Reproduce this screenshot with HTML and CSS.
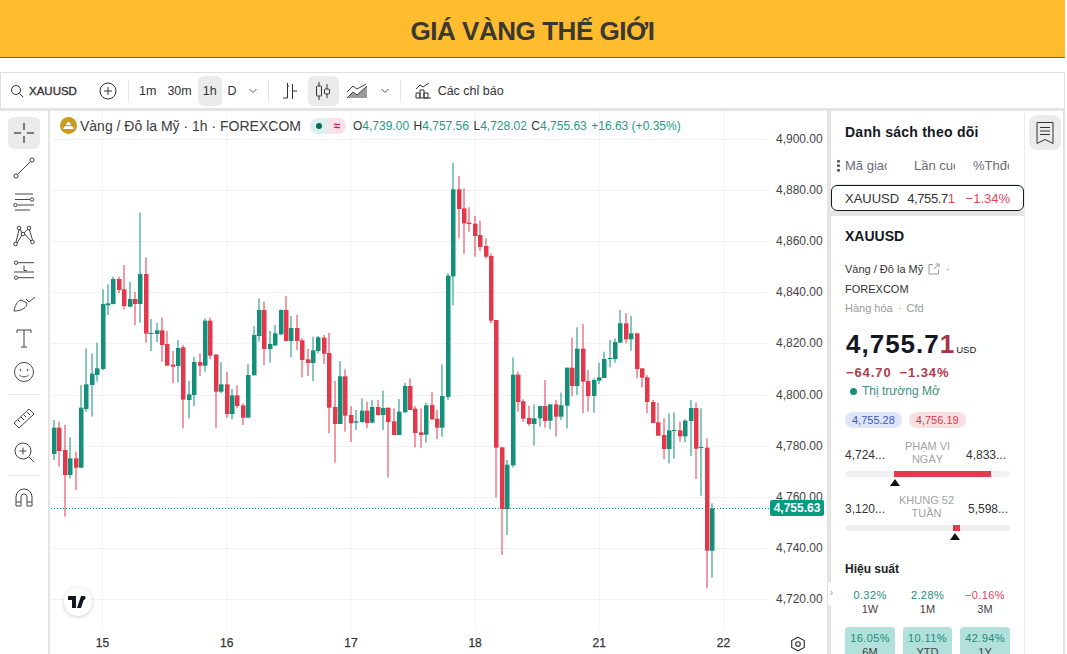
FILE: index.html
```html
<!DOCTYPE html>
<html lang="vi">
<head>
    <meta charset="UTF-8">
    <meta name="viewport" content="width=device-width, initial-scale=1.0">
    <title>Giá vàng thế giới</title>
    <link rel="stylesheet" href="styles.css">
</head>
<body>
    <div class="page">
        <header class="banner">
            <h1>GIÁ VÀNG THẾ GIỚI</h1>
        </header>
        <div class="widget">
            <div class="toolbar">
                <div class="symbol">
                    <svg width="14" height="14" viewBox="0 0 14 14"><circle cx="6" cy="6" r="4.5"/><path d="M9.3 9.3l4 4"/></svg>
                    <span>XAUUSD</span>
                </div>
                <svg class="add-icon" width="18" height="18" viewBox="0 0 18 18"><circle cx="9" cy="9" r="8"/><path d="M9 5v8M5 9h8"/></svg>
                <i class="sep first"></i>
                <span class="tf tf-1m">1m</span>
                <span class="tf">30m</span>
                <span class="tf active">1h</span>
                <span class="tf">D</span>
                <svg class="chev" width="10" height="6" viewBox="0 0 10 6"><path d="M1.5 1l3.5 3.5L8.500 1"/></svg>
                <i class="sep"></i>
                <svg class="tb-icon bars" width="16" height="18" viewBox="0 0 16 18"><path d="M5.500 1v15M1 16h4.500M10.500 2v15M5.500 4H7M10.500 9H15"/></svg>
                <span class="tb-btn active">
                    <svg class="tb-icon" width="16" height="20" viewBox="0 0 16 20"><path d="M4 1v4M4 15v4M12 3v5M12 13v4"/><rect x="1.500" y="5" width="5" height="10" rx="1"/><rect x="9.500" y="8" width="5" height="5" rx="1"/></svg>
                </span>
                <svg class="tb-icon area" width="22" height="16" viewBox="0 0 22 16"><path class="area-fill" d="M1 15l6-6 4 3 10-9v12z"/><path d="M1 9l6-6 4 3 9-5M1 15l6-6 4 3 10-9"/></svg>
                <svg class="chev chev-2" width="10" height="6" viewBox="0 0 10 6"><path d="M1.500 1l3.500 3.500L8.500 1"/></svg>
                <i class="sep"></i>
                <svg class="tb-icon ind" width="17" height="17" viewBox="0 0 17 17"><path d="M1 7l4-4 3 2 6-4M1 16V11h4v5M5 16V8h4v8M9 16v-5h4v5zM1 16h15"/></svg>
                <span class="ind-label">Các chỉ báo</span>
            </div>
            <div class="main">
                <aside class="tools">
                    <span class="tool active">
                        <svg viewBox="0 0 24 24"><path d="M12 2v7M12 15v7M2 12h7M15 12h7"/></svg>
                    </span>
                    <span class="tool">
                        <svg viewBox="0 0 24 24"><circle cx="4" cy="20" r="2"/><circle cx="20" cy="4" r="2"/><path d="M5.500 18.500l13-13"/></svg>
                    </span>
                    <span class="tool">
                        <svg viewBox="0 0 24 24"><path d="M3 4h18M3 9.500h15M6 15h16M3 20h15"/><circle cx="20" cy="9.500" r="1.700"/><circle cx="3.500" cy="15" r="1.700"/></svg>
                    </span>
                    <span class="tool">
                        <svg viewBox="0 0 24 24"><circle cx="7" cy="4" r="1.800"/><circle cx="17" cy="4" r="1.800"/><circle cx="3.500" cy="20" r="1.800"/><circle cx="20.500" cy="18" r="1.800"/><circle cx="11" cy="10" r="1.800"/><path d="M7 6L4 18M8 5l2 4M16 5l-4 4M12.500 10l6.500 7M17.500 6l3 10M5 19l5-8"/></svg>
                    </span>
                    <span class="tool">
                        <svg viewBox="0 0 24 24"><path d="M6 4.700h16M12 7.500v5h3M2 14h20M6 19.700h16"/><circle cx="4" cy="4.700" r="1.700"/><circle cx="4" cy="19.700" r="1.700"/></svg>
                    </span>
                    <span class="tool">
                        <svg viewBox="0 0 24 24"><path d="M2 19c1-5 3-10 7-11l6 3c0 5-6 8-13 8zM14 7l3 3 6-5"/></svg>
                    </span>
                    <span class="tool">
                        <svg viewBox="0 0 24 24"><path d="M5 7V4h14v3M12 4v17M9 21h6"/></svg>
                    </span>
                    <span class="tool">
                        <svg viewBox="0 0 24 24"><circle cx="12" cy="12" r="9.500"/><circle cx="8.500" cy="10" r=".6"/><circle cx="15.500" cy="10" r=".6"/><path d="M7.500 15c2.500 2.500 6.500 2.500 9 0"/></svg>
                    </span>
                    <i class="tool-sep"></i>
                    <span class="tool">
                        <svg viewBox="0 0 24 24"><path d="M2 17L17 3l5 5L7 22zM6 14l2 2M9 11l3 3M12 9l2 2M15 6l3 3"/></svg>
                    </span>
                    <span class="tool">
                        <svg viewBox="0 0 24 24"><circle cx="11" cy="11" r="8"/><path d="M17 17l5 5M11 7.500v7M7.500 11h7"/></svg>
                    </span>
                    <i class="tool-sep second"></i>
                    <span class="tool">
                        <svg viewBox="0 0 24 24"><path d="M4 20V11a8 8 0 0 1 16 0v9h-5v-9a3 3 0 0 0-6 0v9zM4 16h5M15 16h5"/></svg>
                    </span>
                </aside>
                <section class="chart">
                    <svg id="plot" class="plot" viewBox="50 111 777 543"></svg>
                    <div class="legend">
                        <svg class="gold-icon" width="17" height="17" viewBox="0 0 17 17"><circle cx="8.500" cy="8.500" r="8.500"/><path d="M3 12l2-3h7l2 3zM6 8l1.500-3h2L11 8z"/></svg>
                        <span class="legend-title">Vàng / Đô la Mỹ · 1h · FOREXCOM</span>
                        <span class="legend-pill"><b class="pill-dot"><i></i></b><b class="pill-wave">≈</b></span>
                        <span class="ohlc">
                            <span>O<em>4,739.00</em></span>
                            <span>H<em>4,757.56</em></span>
                            <span>L<em>4,728.02</em></span>
                            <span>C<em>4,755.63</em></span>
                            <em>+16.63 (+0.35%)</em>
                        </span>
                    </div>
                    <div class="last-price">4,755.63</div>
                    <div class="tv-logo">
                        <svg width="20" height="12" viewBox="0 0 20 12"><path d="M0 0h8v12H4V4H0zM13 0l-4 12h4l4-12zM15.500 0a2 2 0 1 0 .1 0z"/></svg>
                    </div>
                    <svg class="axis-gear" width="16" height="16" viewBox="0 0 14 14"><path d="M7 1l5.500 3v6L7 13l-5.500-3V4z"/><circle cx="7" cy="7" r="2"/></svg>
                </section>
                <aside class="side">
                    <div class="watch">
                        <h2>Danh sách theo dõi</h2>
                        <div class="watch-head">
                            <span class="grip"></span>
                            <span class="col-name">Mã giao</span>
                            <span class="col-last">Lần cuối</span>
                            <span class="col-chg">%Thđổi</span>
                        </div>
                        <div class="watch-row">
                            <span>XAUUSD</span>
                            <span class="row-price">4,755.7<span class="down">1</span></span>
                            <span class="down row-chg">−1.34%</span>
                        </div>
                    </div>
                    <div class="details">
                        <h3>XAUUSD</h3>
                        <p class="desc">Vàng / Đô la Mỹ
                            <svg width="12" height="12" viewBox="0 0 12 12"><path d="M5 1.500H1v9.500h9.500V7M6 6l5-5M7.500 1H11v3.500"/></svg>
                            <span class="dim">·</span><br>FOREXCOM
                        </p>
                        <p class="kind">Hàng hóa <span class="kind-dot">·</span> Cfd</p>
                        <div class="quote"><span class="quote-val">4,755.7<span class="quote-last">1</span></span><span class="quote-cur">USD</span></div>
                        <div class="change"><span>−64.70</span><span>−1.34%</span></div>
                        <div class="status"><i></i>Thị trường Mở</div>
                        <div class="pills">
                            <span class="pill bid">4,755.28</span>
                            <span class="pill ask">4,756.19</span>
                        </div>
                        <div class="range range-day">
                            <span class="range-val">4,724...</span>
                            <span class="range-name">PHẠM VI NGÀY</span>
                            <span class="range-val">4,833...</span>
                        </div>
                        <div class="track"><i class="fill day"></i></div>
                        <div class="marker marker-day"></div>
                        <div class="range range-year">
                            <span class="range-val">3,120...</span>
                            <span class="range-name">KHUNG 52 TUẦN</span>
                            <span class="range-val">5,598...</span>
                        </div>
                        <div class="track"><i class="fill year"></i></div>
                        <div class="marker marker-year"></div>
                        <h4>Hiệu suất</h4>
                        <div class="perf">
                            <div class="cell"><b class="up">0.32%</b><span>1W</span></div>
                            <div class="cell"><b class="up">2.28%</b><span>1M</span></div>
                            <div class="cell"><b class="down">−0.16%</b><span>3M</span></div>
                            <div class="cell good"><b class="up">16.05%</b><span>6M</span></div>
                            <div class="cell good"><b class="up">10.11%</b><span>YTD</span></div>
                            <div class="cell good"><b class="up">42.94%</b><span>1Y</span></div>
                        </div>
                    </div>
                    <span class="collapse">›</span>
                </aside>
                <aside class="strip">
                    <span class="strip-btn">
                        <svg width="20" height="24" viewBox="0 0 20 24"><path d="M2 1.500h16v21l-8-4-8 4zM5 6.500h10M5 10h10M5 13.500h10"/></svg>
                    </span>
                </aside>
            </div>
        </div>
    </div>
    <script src="chart.js"></script>
</body>
</html>
```

FILE: styles.css
```css
* {
    box-sizing: border-box;
}
html, body {
    margin: 0;
    height: 100%;
    background: #fff;
    overflow: hidden;
}
body {
    font-family: 'Liberation Sans', Arial, sans-serif;
    color: #131722;
}
svg {
    display: block;
    fill: none;
    stroke: #333;
    stroke-width: 1;
}
.page {
    width: 1065px;
    height: 654px;
    overflow: hidden;
}
.banner {
    height: 58px;
    background: #febc2e;
    border-bottom: 1px solid #54704a;
    display: flex;
    align-items: center;
    justify-content: center;
}
.banner h1 {
    margin: 6px 0 0;
    font-size: 26px;
    letter-spacing: -0.45px;
    color: #3a3931;
}
.widget {
    margin-top: 14px;
}

/* top bar */
.toolbar {
    height: 36px;
    border: 1px solid #dedede;
    border-bottom: none;
    display: flex;
    align-items: center;
    font-size: 12.500px;
    color: #333;
    background: #fff;
}
.symbol {
    display: flex;
    align-items: center;
    gap: 5px;
    margin-left: 9px;
    width: 89px;
    font-size: 11.500px;
    font-weight: 400;
    -webkit-text-stroke: 0.35px #333;
}
.add-icon {
    margin-right: 11px;
}
.sep {
    width: 1px;
    height: 22px;
    background: #e6e6e6;
    margin: 0 5px 0 0;
}
.tf {
    padding: 0 5px;
    height: 30px;
    line-height: 30px;
    margin-right: 1px;
    border-radius: 6px;
}
.tf.active, .tb-btn.active {
    background: #ebebeb;
}
.chev {
    margin: 0 10px 0 5px;
    stroke: #555;
}
.bars {
    margin: 0 10px 0 8px;
}
.tb-btn {
    width: 31px;
    height: 30px;
    border-radius: 6px;
    display: flex;
    align-items: center;
    justify-content: center;
    margin-right: 7px;
}
.area {
    margin-right: 12px;
    stroke: #444;
}
.area-fill {
    fill: #9a9a9a;
    stroke: none;
}
.chev-2 {
    margin: 0 10px 0 0;
}
.ind {
    margin: 0 6px 0 9px;
}
.ind-label {
    font-size: 12.500px;
}

/* body of the widget */
.main {
    height: 546px;
    background: #e4e4e4;
    padding-top: 3px;
    display: flex;
    align-items: stretch;
}
.tools {
    width: 48px;
    margin-right: 2px;
    background: #fff;
    padding-top: 6px;
    display: flex;
    flex-direction: column;
    align-items: center;
}
.tool {
    width: 32px;
    height: 34px;
    flex: none;
    display: flex;
    align-items: center;
    justify-content: center;
    border-radius: 6px;
}
.tool svg {
    width: 24px;
    height: 24px;
    stroke: #444;
}
.tool.active {
    height: 32px;
    margin-bottom: 2px;
    background: #ebebeb;
}
.tool.active svg path {
    stroke: #555;
    stroke-width: 1.500;
}
.tool-sep {
    width: 32px;
    height: 1px;
    flex: none;
    background: #e6e6e6;
    margin: 5px 0 6px;
}
.tool-sep.second {
    margin: 6px 0 5px;
}

/* chart pane */
.chart {
    position: relative;
    width: 777px;
    background: #fff;
}
.plot {
    width: 777px;
    height: 543px;
    stroke: none;
}
.plot text {
    font-size: 12px;
    fill: #444;
    stroke: none;
}
.plot .time {
    text-anchor: middle;
    fill: #333;
    stroke: #333;
    stroke-width: 0.25;
}
.legend {
    position: absolute;
    left: 10px;
    top: 6px;
    display: flex;
    align-items: center;
    height: 17px;
    white-space: nowrap;
}
.gold-icon {
    stroke: none;
    fill: #cc9c21;
    margin-right: 3px;
}
.gold-icon path {
    fill: #fff;
}
.legend-title {
    font-size: 14px;
    color: #3c3c3c;
    width: 230px;
}
.legend-pill {
    width: 36px;
    height: 16px;
    border-radius: 8px;
    overflow: hidden;
    display: flex;
    margin-right: 7px;
}
.legend-pill b {
    flex: 1;
    display: flex;
    align-items: center;
    justify-content: center;
    font-size: 12px;
}
.pill-dot {
    background: #dcf1ed;
}
.pill-dot i {
    width: 6px;
    height: 6px;
    border-radius: 50%;
    background: #0a6b5a;
}
.pill-wave {
    background: #fbe0e8;
    color: #c2185b;
}
.ohlc {
    display: flex;
    gap: 4.500px;
    font-size: 12px;
    color: #333;
}
.ohlc em {
    font-style: normal;
    color: #1c9c84;
}
.last-price {
    position: absolute;
    left: 720px;
    top: 389px;
    width: 54px;
    height: 16px;
    line-height: 16px;
    border-radius: 2px;
    background: #089981;
    color: #fff;
    font-size: 12px;
    font-weight: 700;
    text-align: center;
}
.tv-logo {
    position: absolute;
    left: 14px;
    top: 477px;
    width: 28px;
    height: 28px;
    border-radius: 50%;
    background: #fff;
    box-shadow: 0 1px 4px rgba(0, 0, 0, 0.2);
    display: flex;
    align-items: center;
    justify-content: center;
}
.tv-logo svg {
    fill: #131722;
    stroke: none;
}
.axis-gear {
    position: absolute;
    left: 740px;
    top: 525px;
}

/* watchlist + details */
.side {
    position: relative;
    width: 193px;
    margin-left: 4px;
    display: flex;
    flex-direction: column;
    gap: 5px;
}
.watch {
    background: #fff;
    height: 100px;
    flex: none;
}
.watch h2 {
    margin: 0;
    padding: 13px 0 0 14px;
    font-size: 14px;
    line-height: 16px;
    letter-spacing: 0.25px;
}
.watch-head {
    display: flex;
    align-items: center;
    height: 20px;
    margin-top: 15px;
    font-size: 13px;
    color: #6a6d78;
}
.grip {
    width: 3px;
    height: 13px;
    margin: 0 5px 0 6px;
    background: radial-gradient(circle, #555 1.300px, transparent 1.500px) 0 0 / 3px 4.500px;
}
.col-name, .col-last, .col-chg {
    overflow: hidden;
    white-space: nowrap;
}
.col-name {
    width: 42px;
}
.col-last {
    width: 41px;
    margin-left: 27px;
}
.col-chg {
    width: 36px;
    margin-left: 18px;
}
.watch-row {
    margin-top: 10px;
    height: 26px;
    border: 1px solid #131722;
    border-radius: 6px;
    display: flex;
    align-items: center;
    gap: 8px;
    padding-left: 13px;
    font-size: 13px;
    color: #333;
    box-shadow: 0 -6px 0 -5px #e6e6e6;
}
.row-price {
    letter-spacing: -0.4px;
}
.row-chg {
    margin-left: 3px;
}
.down {
    color: #e0455a;
}
.up {
    color: #1c8c78;
}
.details {
    flex: 1;
    background: #fff;
    padding: 12px 14px 0;
    overflow: hidden;
}
.details h3 {
    margin: 0;
    font-size: 14px;
    line-height: 16px;
}
.desc {
    margin: 15px 0 0;
    font-size: 11px;
    line-height: 20px;
    color: #333;
}
.desc svg {
    display: inline-block;
    vertical-align: -2px;
    margin: 0 2px;
    stroke: #999;
}
.dim {
    color: #888;
}
.kind {
    margin: 2px 0 0;
    font-size: 11px;
    line-height: 15px;
    color: #9a9a9a;
}
.kind-dot {
    margin: 0 2px;
}
.quote {
    margin-top: 13px;
    display: flex;
    align-items: baseline;
    height: 31px;
    padding-left: 1px;
}
.quote-val {
    font-size: 26px;
    font-weight: 700;
    letter-spacing: 1px;
    color: #131722;
}
.quote-last {
    color: #a8324a;
}
.quote-cur {
    font-size: 9.500px;
    margin-left: 1px;
}
.change {
    display: flex;
    gap: 8px;
    margin-top: 5px;
    padding-left: 1px;
    font-size: 13px;
    line-height: 16px;
    font-weight: 700;
    letter-spacing: 0.900px;
    color: #b03a4e;
}
.status {
    display: flex;
    align-items: center;
    gap: 5px;
    margin: 2px 0 0 5px;
    font-size: 12px;
    line-height: 16px;
    color: #3e8e7e;
}
.status i {
    width: 7px;
    height: 7px;
    border-radius: 50%;
    background: #1a8f7a;
}
.pills {
    display: flex;
    gap: 7px;
    margin-top: 13px;
}
.pill {
    height: 16px;
    line-height: 16px;
    padding: 0 7px;
    border-radius: 8px;
    font-size: 11px;
}
.bid {
    background: #dfe6fb;
    color: #3d57c4;
}
.ask {
    background: #f8dfe2;
    color: #d8384c;
}
.range {
    display: flex;
    align-items: center;
    justify-content: space-between;
    margin-top: 10px;
    padding-right: 4px;
    height: 30px;
    font-size: 12px;
    color: #333;
}
.range-val {
    padding-top: 4px;
}
.range-year {
    margin-top: 6px;
    padding-right: 2px;
}
.range-name {
    width: 62px;
    text-align: center;
    font-size: 11px;
    line-height: 13px;
    color: #a3a3a3;
}
.range-day .range-name {
    margin-left: 4px;
}
.track {
    height: 6px;
    margin-top: 3px;
    background: #f0f0f0;
    border-radius: 3px;
    position: relative;
}
.fill {
    position: absolute;
    top: 0;
    height: 6px;
    background: #e23a4d;
}
.fill.day {
    left: 49px;
    width: 97px;
}
.fill.year {
    left: 108px;
    width: 7px;
}
.marker {
    width: 0;
    height: 0;
    margin-top: 2px;
    border-left: 5px solid transparent;
    border-right: 5px solid transparent;
    border-bottom: 7px solid #111;
}
.marker-day {
    margin-left: 45px;
}
.marker-year {
    margin-left: 105px;
}
.details h4 {
    margin: 22px 0 0;
    font-size: 12px;
    line-height: 14px;
    font-weight: 700;
    color: #222;
}
.perf {
    display: grid;
    grid-template-columns: 50px 49px 50px;
    justify-content: space-between;
    gap: 8px 8px;
    margin-top: 9px;
}
.cell {
    height: 34px;
    padding-top: 3px;
    border-radius: 4px;
    display: flex;
    flex-direction: column;
    align-items: center;
    font-size: 11px;
    line-height: 14px;
    color: #444;
}
.cell b {
    font-weight: 400;
    letter-spacing: 0.400px;
}
.cell.good {
    background: #b2e0da;
    height: 40px;
    padding-top: 4px;
}
.collapse {
    position: absolute;
    left: -3px;
    top: 471px;
    width: 7px;
    height: 23px;
    line-height: 21px;
    background: #fff;
    border-radius: 2px;
    text-align: center;
    font-size: 10px;
    color: #999;
}
.strip {
    width: 40px;
    margin-left: 0;
    background: #fff;
    border-left: 1px solid #ececec;
    border-right: 1px solid #dedede;
    padding: 4px 0 0 4px;
}
.strip-btn {
    display: flex;
    align-items: center;
    justify-content: center;
    width: 32px;
    height: 35px;
    border-radius: 8px;
    background: #ebebeb;
}
```

FILE: chart.js
```js
// candles read off the picture: [up?, wickTop, wickBottom, bodyTop, bodyBottom]
// y values are in thirds of a pixel, measured from the group's `top`
const groups = [
    { top: 150, rows: [
        [1,810,930,833,912],[0,815,950,833,903],[0,825,1100,900,975],[1,862,985,925,975],[0,905,1020,925,953],
        [1,705,953,773,953],[1,595,785,703,777],[1,610,800,671,705],[1,578,695,655,675],[1,418,660,462,657],
        [1,403,495,460,466],[1,380,463,387,462],[0,380,430,387,420],[0,345,478,418,468],[1,396,472,447,470],
        [0,426,525,447,462],[1,188,518,372,462],[0,322,578,372,551],[1,507,603,549,552],[1,518,576,541,552],
        [0,502,635,541,585],[0,543,647,582,647],[0,603,700,644,650],[1,570,697,594,648],[0,585,835,592,749],
        [1,693,805,733,750],[1,620,768,636,735],[0,610,678,636,647],[1,505,665,512,647],[0,503,628,512,617],
        [0,612,833,614,725],[1,636,730,703,725],[0,665,803,703,792],[1,717,808,736,792],[0,706,775,736,768],
        [0,760,825,766,803],[1,642,803,675,803],[1,528,676,555,676],[1,445,575,480,558],[0,455,645,480,597],
        [1,543,638,582,597],[1,525,588,550,586],[1,478,556,480,553],[0,438,573,480,573],[1,498,622,534,573],
        [0,495,600,534,573],[0,565,682,571,630],[0,597,678,628,639],[1,560,693,601,639],[1,558,610,562,603],
        [0,555,642,563,611],[0,549,850,609,773],[0,693,938,771,822],[1,633,822,679,822],[0,658,845,679,797],
        [0,768,876,795,820],[1,780,840,814,818],[1,745,818,782,816],[0,755,835,782,819],[1,750,820,771,818],
        [0,750,797,771,795],[1,722,840,774,795],[0,773,982,773,816],[0,775,855,814,855],[1,747,855,785,855],
        [1,698,787,708,787],[0,685,780,708,780],[0,768,892,776,849],[0,775,893,847,855],[1,758,878,766,854],
        [0,727,810,765,808],[0,780,868,806,833],[1,643,860,738,833],[1,370,750,377,741],[1,38,466,118,379],
        [0,78,265,118,177],[0,115,312,175,220],[0,172,245,218,222],[0,198,320,221,258],[0,212,303,255,291],
        [0,265,325,288,320],[0,310,520,318,512],[0,510,1043,510,893],[0,892,1215,892,1077],[1,930,1155,944,1077],
        [1,622,952,674,946],[0,665,785,674,756],[0,748,815,754,806],[0,767,828,804,822],[1,763,887,805,822],
        [1,768,830,768,805],[0,690,833,768,813],[1,762,838,763,812]
    ] },
    { top: 300, rows: [
        [0,300,410,313,350],[1,278,360,316,350],[1,203,385,203,317],[0,113,288,203,258],[1,82,285,146,258],
        [0,72,340,146,245],[0,210,335,243,288],[1,235,338,240,288],[1,188,252,232,242],[1,155,234,177,234],
        [1,120,202,174,177],[1,115,188,126,177],[1,30,128,70,128],[0,40,130,70,118],[1,48,152,100,118],
        [0,98,235,100,207],[0,205,262,205,233],[0,225,340,232,306],[0,300,370,306,369],[0,308,408,367,407],
        [0,355,478,405,447],[1,340,490,391,447],[1,337,476,390,393],[0,365,425,391,409],[1,358,427,362,409],
        [1,300,468,324,363],[0,308,537,324,446],[1,325,587,441,444],[0,415,865,443,752],[1,610,833,625,752]
    ] }
];

const plot = document.getElementById('plot');
const NS = 'http://www.w3.org/2000/svg';

function add(tag, attrs, text) {
    const el = document.createElementNS(NS, tag);
    for (const key in attrs) el.setAttribute(key, attrs[key]);
    if (text) el.textContent = text;
    plot.appendChild(el);
}

// grid
for (let i = 0; i < 10; i++) {
    const y = Math.round(139 + i * 51.1) + 0.5;
    add('line', { x1: 51, x2: 770, y1: y, y2: y, stroke: '#f1f2f4' });
    const price = 4900 - i * 20;
    const label = '4,' + String(price).slice(1) + '.00';
    add('text', { x: 776, y: y + 3.5 }, label);
}
const days = ['15', '16', '17', '18', '21', '22'];
days.forEach((day, i) => {
    const x = 102.5 + i * 124.2;
    add('line', { x1: x, x2: x, y1: 111, y2: 630, stroke: '#f1f2f4' });
    add('text', { x: x, y: 647, class: 'time' }, day);
});

// last price line
add('line', { x1: 51, x2: 770, y1: 508.5, y2: 508.5, stroke: '#089981', 'stroke-dasharray': '1 2' });

// candles
let index = 0;
groups.forEach(group => {
    group.rows.forEach(([up, wickTop, wickBottom, bodyTop, bodyBottom]) => {
        const x = Math.round(54 + index * 5.395);
        const color = up ? '#138f7a' : '#e2384c';
        const top = group.top + wickTop / 3;
        const bottom = group.top + wickBottom / 3;
        const bTop = group.top + Math.min(bodyTop, bodyBottom) / 3;
        const bHeight = Math.max(Math.abs(bodyBottom - bodyTop) / 3, 1);
        add('rect', { x: x - 0.5, y: top, width: 1, height: bottom - top, fill: color });
        add('rect', { x: x - 2, y: bTop, width: 4.5, height: bHeight, fill: color });
        index++;
    });
});
```
